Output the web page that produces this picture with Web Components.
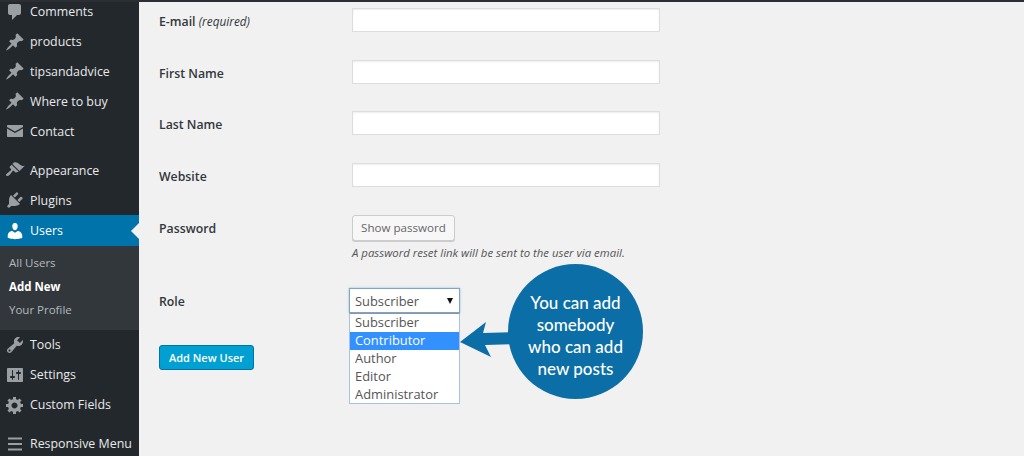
<!DOCTYPE html>
<html>
<head>
<meta charset="utf-8">
<title>Add New User</title>
<style>
  html, body { margin: 0; height: 100%; overflow: hidden; }
  body { font-family: "Open Sans", "Liberation Sans", sans-serif; font-size: 13px; }
  form-row i { font-size: 11.8px; font-weight: 400; }
</style>
</head>
<body>
<admin-page>
  <admin-sidebar slot="sidebar">
    <menu-item icon="comments">Comments</menu-item>
    <menu-item icon="pin">products</menu-item>
    <menu-item icon="pin">tipsandadvice</menu-item>
    <menu-item icon="pin">Where to buy</menu-item>
    <menu-item icon="mail" class="group-end">Contact</menu-item>
    <menu-item icon="brush">Appearance</menu-item>
    <menu-item icon="plugin">Plugins</menu-item>
    <menu-item icon="user" current>Users</menu-item>
    <sub-menu>
      <sub-item>All Users</sub-item>
      <sub-item current>Add New</sub-item>
      <sub-item>Your Profile</sub-item>
    </sub-menu>
    <menu-item icon="wrench">Tools</menu-item>
    <menu-item icon="sliders">Settings</menu-item>
    <menu-item icon="gear" class="group-end">Custom Fields</menu-item>
    <menu-item icon="bars">Responsive Menu</menu-item>
  </admin-sidebar>
  <add-user-form>
    <form-row><span slot="label">E-mail <i>(required)</i></span><text-field></text-field></form-row>
    <form-row><span slot="label">First Name</span><text-field></text-field></form-row>
    <form-row><span slot="label">Last Name</span><text-field></text-field></form-row>
    <form-row><span slot="label">Website</span><text-field></text-field></form-row>
    <form-row>
      <span slot="label">Password</span>
      <ghost-button>Show password</ghost-button>
      <field-hint>A password reset link will be sent to the user via email.</field-hint>
    </form-row>
    <form-row>
      <span slot="label">Role</span>
      <role-select value="Subscriber" options="Subscriber,Contributor,Author,Editor,Administrator" selected="Contributor"></role-select>
    </form-row>
    <primary-button>Add New User</primary-button>
  </add-user-form>
  <callout-bubble>You can add somebody who can add new posts</callout-bubble>
</admin-page>

<script>
const ICONS = {
  comments: 'M5 2h9c1.1 0 2 .9 2 2v7c0 1.1-.9 2-2 2h-2l-5 5v-5H5c-1.1 0-2-.9-2-2V4c0-1.1.9-2 2-2z',
  pin: 'M10.44 3.02l1.82-1.82 6.36 6.35-1.83 1.82c-1.05-.68-2.48-.57-3.41.36l-.75.75c-.92.93-1.04 2.35-.35 3.41l-1.83 1.82-2.41-2.41-2.8 2.79c-.42.42-3.38 2.71-3.8 2.29s1.86-3.39 2.28-3.81l2.79-2.79L4.1 9.36l1.83-1.82c1.05.69 2.48.57 3.4-.36l.75-.75c.93-.92 1.05-2.35.36-3.41z',
  mail: 'M3 4h14c.55 0 1 .45 1 1v1l-8 4.5L2 6V5c0-.55.45-1 1-1zM2 7.5l8 4.5 8-4.5V15c0 .55-.45 1-1 1H3c-.55 0-1-.45-1-1V7.5z',
  brush: 'M14.48 11.06L7.41 3.99l1.5-1.5c.5-.56 2.3-.47 3.51.32 1.21.8 1.43 1.28 2.91 2.1 1.18.64 2.45 1.26 4.45.85zm-.71.71L6.7 4.7 4.93 6.47c-.39.39-.39 1.02 0 1.41l1.06 1.06c.39.39.39 1.03 0 1.42-.6.6-1.43 1.11-2.21 1.69-.35.26-.7.53-1.01.84C1.43 13.23.4 14.67 1.4 15.66s2.41-.02 3.75-1.37c.31-.31.58-.66.84-1.01.58-.78 1.09-1.61 1.69-2.21.39-.39 1.02-.39 1.41 0l1.06 1.06c.39.39 1.02.39 1.41 0z',
  plugin: 'M13.11 4.36L9.87 7.6 8 5.73l3.24-3.24c.35-.34 1.05-.2 1.56.32.52.51.66 1.21.31 1.55zm-8 1.77l.91-1.12 9.01 9.01-1.19.84c-.71.71-2.63 1.16-3.82 1.16H6.14L4.9 17.26c-.59.59-1.54.59-2.12 0-.59-.58-.59-1.53 0-2.12l1.24-1.24v-3.88c0-1.13.4-3.19 1.09-3.89zm7.26 3.97l3.24-3.24c.34-.35 1.04-.21 1.55.31.52.51.66 1.21.31 1.55l-3.24 3.25z',
  user: 'M10 9.25c-2.27 0-2.73-3.44-2.73-3.44C7 4.02 7.82 2 9.97 2c2.16 0 2.98 2.02 2.71 3.81 0 0-.41 3.44-2.68 3.44zm0 2.57L12.72 10c2.39 0 4.52 2.33 4.52 4.53v2.49s-3.65 1.13-7.24 1.13c-3.65 0-7.24-1.13-7.24-1.13v-2.49c0-2.25 1.94-4.48 4.47-4.48z',
  wrench: 'M16.68 9.77c-1.34 1.34-3.3 1.67-4.95.99l-5.41 6.52c-.99.99-2.59.99-3.58 0s-.99-2.59 0-3.57l6.52-5.42c-.68-1.65-.35-3.61.99-4.95 1.28-1.28 3.12-1.62 4.72-1.06l-2.89 2.89 2.82 2.82 2.86-2.87c.53 1.58.18 3.39-1.08 4.65zM3.81 16.21c.4.39 1.04.39 1.43 0 .4-.4.4-1.04 0-1.43-.39-.4-1.03-.4-1.43 0-.39.39-.39 1.03 0 1.43z',
  sliders: 'M18 16V4c0-.55-.45-1-1-1H3c-.55 0-1 .45-1 1v12c0 .55.45 1 1 1h14c.55 0 1-.45 1-1zM8 11h1c.55 0 1 .45 1 1s-.45 1-1 1H8v1.5c0 .28-.22.5-.5.5s-.5-.22-.5-.5V13H6c-.55 0-1-.45-1-1s.45-1 1-1h1V5.5c0-.28.22-.5.5-.5s.5.22.5.5V11zm5-2h-1c-.55 0-1-.45-1-1s.45-1 1-1h1V5.5c0-.28.22-.5.5-.5s.5.22.5.5V7h1c.55 0 1 .45 1 1s-.45 1-1 1h-1v5.5c0 .28-.22.5-.5.5s-.5-.22-.5-.5V9z',
  gear: 'M18 12h-2.18c-.17.7-.44 1.35-.81 1.93l1.54 1.54-2.1 2.1-1.54-1.54c-.58.36-1.23.63-1.91.79V19H8v-2.18c-.68-.16-1.33-.43-1.91-.79l-1.54 1.54-2.12-2.12 1.54-1.54c-.36-.58-.63-1.23-.79-1.91H1V9.03h2.17c.16-.7.44-1.35.8-1.94L2.43 5.55l2.1-2.1 1.54 1.54c.58-.37 1.24-.64 1.93-.81V2h3v2.18c.68.16 1.33.43 1.91.79l1.54-1.54 2.12 2.12-1.54 1.54c.36.59.64 1.24.8 1.94H18V12zm-8.5 1.5c1.66 0 3-1.34 3-3s-1.34-3-3-3-3 1.34-3 3 1.34 3 3 3z',
  bars: 'M3 3.5h14v2H3zM3 9h14v2H3zM3 14.5h14v2H3z'
};

class ShadowBase extends HTMLElement {
  constructor() {
    super();
    this.attachShadow({ mode: 'open' });
    this.shadowRoot.innerHTML = this.render();
  }
  render() { return '<slot></slot>'; }
}

class AdminPage extends ShadowBase {
  render() {
    return `
      <style>
        :host { display: flex; height: 456px; position: relative; overflow: hidden; background: #f1f1f1; }
        .strip { position: absolute; left: 0; right: 0; top: 0; height: 2px; background: #2b2f33; }
        .content { flex: 1; min-width: 0; }
      </style>
      <slot name="sidebar"></slot>
      <div class="content"><slot></slot></div>
      <div class="strip"></div>
    `;
  }
}

class AdminSidebar extends ShadowBase {
  render() {
    return `
      <style>
        :host { display: block; flex: 0 0 139px; width: 139px; height: 456px; background: #23282d; color: #eee; overflow: hidden; }
        .list { display: flex; flex-direction: column; margin-top: -3px; }
      </style>
      <div class="list"><slot></slot></div>
    `;
  }
}

class MenuItem extends ShadowBase {
  connectedCallback() {
    this.shadowRoot.querySelector('path').setAttribute('d', ICONS[this.getAttribute('icon')]);
  }
  render() {
    return `
      <style>
        :host { display: flex; align-items: center; gap: 5px; height: 29.8px; padding-left: 5px; position: relative; color: #e8e9ea; font-size: 12.4px; white-space: nowrap; }
        :host(.group-end) { margin-bottom: 9.5px; }
        :host([current]) { background: #0073aa; color: #fff; height: 31px; }
        svg { width: 20px; height: 20px; flex: none; fill: #9a9fa4; }
        :host([current]) svg { fill: #fff; }
        :host([current])::after {
          content: ""; position: absolute; right: 0; top: 8px;
          border: 8px solid transparent; border-right-color: #f1f1f1; border-left-width: 0;
        }
      </style>
      <svg viewBox="0 0 20 20"><path></path></svg>
      <slot></slot>
    `;
  }
}

class SubMenu extends ShadowBase {
  render() {
    return `
      <style>
        :host { display: flex; flex-direction: column; height: 84px; padding-top: 5px; box-sizing: border-box; background: #32373c; }
      </style>
      <slot></slot>
    `;
  }
}

class SubItem extends ShadowBase {
  render() {
    return `
      <style>
        :host { display: flex; align-items: center; height: 23.5px; padding-left: 9px; font-size: 11.5px; color: #b4b9be; }
        :host([current]) { color: #fff; font-weight: 700; }
      </style>
      <slot></slot>
    `;
  }
}

class AddUserForm extends ShadowBase {
  render() {
    return `
      <style>
        :host { display: block; margin-top: -6px; padding-left: 20px; }
      </style>
      <slot></slot>
    `;
  }
}

class FormRow extends ShadowBase {
  render() {
    return `
      <style>
        :host { display: grid; grid-template-columns: 193px 1fr; padding: 14px 0 13.7px; color: #32373c; }
        :host(:nth-child(5)) { padding-bottom: 12.7px; }
        .label { height: 24px; font-weight: 600; font-size: 12.3px; line-height: 27px; }
        .field { display: flex; flex-direction: column; align-items: flex-start; }
      </style>
      <div class="label"><slot name="label"></slot></div>
      <div class="field"><slot></slot></div>
    `;
  }
}

class TextField extends ShadowBase {
  render() {
    return `
      <style>
        :host { display: block; width: 308px; height: 24px; }
        input { display: block; width: 100%; height: 100%; box-sizing: border-box; margin: 0; padding: 0; background: #fff; border: 1px solid #ddd; box-shadow: inset 0 1px 2px rgba(0,0,0,.07); outline: 0; }
      </style>
      <input type="text">
    `;
  }
}

class GhostButton extends ShadowBase {
  render() {
    return `
      <style>
        :host { display: block; }
        button { display: block; height: 26px; width: 103px; padding: 0; box-sizing: border-box; background: #f7f7f7; border: 1px solid #ccc; border-radius: 3px; box-shadow: 0 1px 0 #ccc; color: #666; font: 11.6px "Open Sans", "Liberation Sans", sans-serif; }
      </style>
      <button type="button"><slot></slot></button>
    `;
  }
}

class FieldHint extends ShadowBase {
  render() {
    return `
      <style>
        :host { display: block; margin-top: 3px; line-height: 18px; font-size: 11.4px; font-style: italic; color: #555; white-space: nowrap; }
      </style>
      <slot></slot>
    `;
  }
}

class RoleSelect extends ShadowBase {
  connectedCallback() {
    this.shadowRoot.querySelector('.value').textContent = this.getAttribute('value');
    const list = this.shadowRoot.querySelector('.options');
    for (const name of this.getAttribute('options').split(',')) {
      const option = document.createElement('div');
      option.className = name === this.getAttribute('selected') ? 'option on' : 'option';
      option.textContent = name;
      list.appendChild(option);
    }
  }
  render() {
    return `
      <style>
        :host { display: block; position: relative; width: 111px; height: 25px; margin-left: -3px; color: #555; font-size: 12.9px; }
        .box { display: flex; align-items: center; justify-content: space-between; box-sizing: border-box; height: 100%; padding: 0 5px; background: #fff; border: 1px solid #7fa4c9; box-shadow: 0 0 2px rgba(30,140,190,.5); }
        .caret { width: 0; height: 0; border: 3.5px solid transparent; border-top: 6px solid #111; border-bottom: 0; margin-right: 1px; }
        .options { position: absolute; left: 0; right: 0; top: 100%; height: 91px; box-sizing: border-box; background: #fff; border: 1px solid #a9c3df; border-top-color: #8a96a3; }
        .option { height: 18px; line-height: 17px; padding-left: 5px; }
        .on { background: #3390ff; color: #fff; }
      </style>
      <div class="box"><span class="value"></span><span class="caret"></span></div>
      <div class="options"></div>
    `;
  }
}

class PrimaryButton extends ShadowBase {
  render() {
    return `
      <style>
        :host { display: block; margin-top: 18px; }
        button { display: block; width: 95px; height: 25px; padding: 0; box-sizing: border-box; background: #00a0d2; border: 1px solid #0073aa; border-radius: 3px; color: #fff; font: 600 11px "Open Sans", "Liberation Sans", sans-serif; }
      </style>
      <button type="button"><slot></slot></button>
    `;
  }
}

class CalloutBubble extends ShadowBase {
  render() {
    return `
      <style>
        :host { position: absolute; left: 460px; top: 264px; display: block; width: 183px; height: 135px; }
        svg { position: absolute; inset: 0; width: 100%; height: 100%; fill: #0b6ea6; }
        .text { position: absolute; left: 48px; top: 0; width: 135px; height: 135px; display: flex; align-items: center; justify-content: center; text-align: center; box-sizing: border-box; padding: 8px 14px 0; color: #fff; font: 500 17px/22px Lato, "Open Sans", sans-serif; }
      </style>
      <svg viewBox="0 0 183 135">
        <circle cx="115.5" cy="67.5" r="67.5"></circle>
        <path d="M0 78 L26 58 L23 69 L55 68 L55 80 L25 81 L31 93 Z"></path>
      </svg>
      <div class="text"><slot></slot></div>
    `;
  }
}

customElements.define('admin-page', AdminPage);
customElements.define('admin-sidebar', AdminSidebar);
customElements.define('menu-item', MenuItem);
customElements.define('sub-menu', SubMenu);
customElements.define('sub-item', SubItem);
customElements.define('add-user-form', AddUserForm);
customElements.define('form-row', FormRow);
customElements.define('text-field', TextField);
customElements.define('ghost-button', GhostButton);
customElements.define('field-hint', FieldHint);
customElements.define('role-select', RoleSelect);
customElements.define('primary-button', PrimaryButton);
customElements.define('callout-bubble', CalloutBubble);
</script>
</body>
</html>
